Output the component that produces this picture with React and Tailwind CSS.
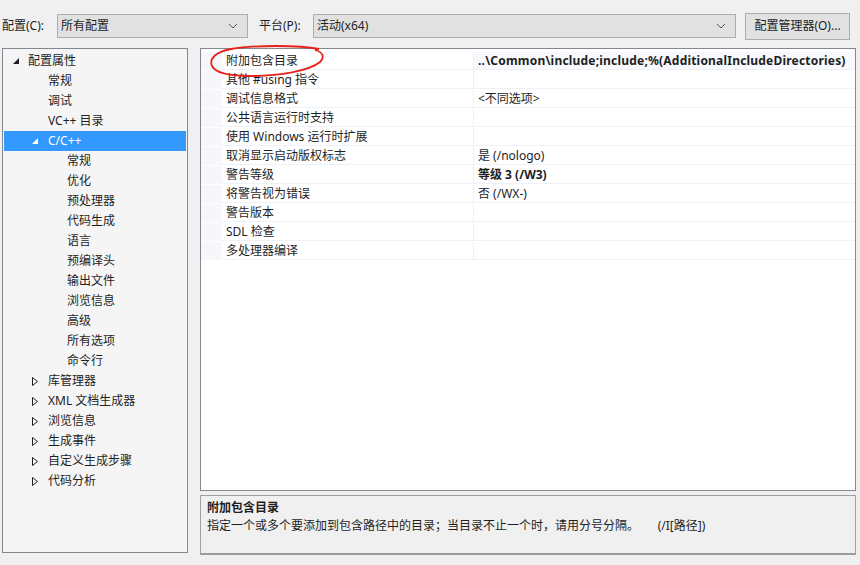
import React from 'react';

// Property page dialog: config bar, tree on the left, property grid + description on the right
const font = { fontFamily: '"Noto Sans", "Noto Sans CJK SC", sans-serif' };

const tree = [
    { label: '配置属性', level: 0, arrow: 'open' },
    { label: '常规', level: 1 },
    { label: '调试', level: 1 },
    { label: 'VC++ 目录', level: 1 },
    { label: 'C/C++', level: 1, arrow: 'open', selected: true },
    { label: '常规', level: 2 },
    { label: '优化', level: 2 },
    { label: '预处理器', level: 2 },
    { label: '代码生成', level: 2 },
    { label: '语言', level: 2 },
    { label: '预编译头', level: 2 },
    { label: '输出文件', level: 2 },
    { label: '浏览信息', level: 2 },
    { label: '高级', level: 2 },
    { label: '所有选项', level: 2 },
    { label: '命令行', level: 2 },
    { label: '库管理器', level: 1, arrow: 'closed' },
    { label: 'XML 文档生成器', level: 1, arrow: 'closed' },
    { label: '浏览信息', level: 1, arrow: 'closed' },
    { label: '生成事件', level: 1, arrow: 'closed' },
    { label: '自定义生成步骤', level: 1, arrow: 'closed' },
    { label: '代码分析', level: 1, arrow: 'closed' },
];

const props = [
    { name: '附加包含目录', value: '..\\Common\\include;include;%(AdditionalIncludeDirectories)', bold: true, wide: true },
    { name: '其他 #using 指令', value: '' },
    { name: '调试信息格式', value: '<不同选项>' },
    { name: '公共语言运行时支持', value: '' },
    { name: '使用 Windows 运行时扩展', value: '' },
    { name: '取消显示启动版权标志', value: '是 (/nologo)' },
    { name: '警告等级', value: '等级 3 (/W3)', bold: true },
    { name: '将警告视为错误', value: '否 (/WX-)' },
    { name: '警告版本', value: '' },
    { name: 'SDL 检查', value: '' },
    { name: '多处理器编译', value: '' },
];

const Chevron = () => (
    <svg width="10" height="6" viewBox="0 0 10 6" className="mr-[9px]">
        <path d="M1 1 L5 5 L9 1" fill="none" stroke="#555" strokeWidth="1" />
    </svg>
);

const Arrow = ({ type, selected }) =>
    type === 'open' ? (
        <svg width="6" height="6" viewBox="0 0 6 6">
            <path d="M6 0 L6 6 L0 6 Z" fill={selected ? '#fff' : '#1e1e1e'} />
        </svg>
    ) : (
        <svg width="6" height="9" viewBox="0 0 6 9">
            <path d="M0.5 0.5 L5.5 4.5 L0.5 8.5 Z" fill="none" stroke="#1e1e1e" strokeWidth="1" />
        </svg>
    );

const indents = ['pl-[24px]', 'pl-[44px]', 'pl-[63px]'];
const arrowPos = ['left-[9px]', 'left-[28px]', 'left-[48px]'];

const App = () => {
    return (
        <div className="w-[860px] h-[565px] bg-[#f0f0f0] text-[12px] text-[#1e1e1e] overflow-hidden" style={font}>
            {/* Config bar */}
            <div className="flex items-center h-[48px] pt-[4px] pl-[2px]">
                <span className="w-[55px]">配置(C):</span>
                <div className="w-[191px] h-[24px] flex items-center justify-between bg-[#e1e1e1] border border-[#adadad] pl-[3px]">
                    <span>所有配置</span>
                    <Chevron />
                </div>
                <span className="ml-[11px] w-[54px]">平台(P):</span>
                <div className="w-[423px] h-[24px] flex items-center justify-between bg-[#e1e1e1] border border-[#adadad] pl-[3px]">
                    <span>活动(x64)</span>
                    <Chevron />
                </div>
                <div className="ml-[9px] w-[105px] h-[27px] flex items-center justify-center bg-[#e1e1e1] border border-[#adadad]">
                    配置管理器(O)...
                </div>
            </div>

            <div className="flex">
                {/* Tree */}
                <div className="ml-[2px] w-[186px] h-[505px] bg-[#f5f5f5] border border-[#828790] pt-[2px] px-[1px]">
                    {tree.map((t, i) => (
                        <div
                            key={i}
                            className={`relative h-[20px] flex items-center ${indents[t.level]} ${t.selected ? 'bg-[#3399ff] text-white' : ''}`}
                        >
                            {t.arrow && (
                                <span className={`absolute ${arrowPos[t.level]} top-0 h-full flex items-center`}>
                                    <Arrow type={t.arrow} selected={t.selected} />
                                </span>
                            )}
                            {t.label}
                        </div>
                    ))}
                </div>

                {/* Right side */}
                <div className="ml-[12px] w-[656px] flex flex-col gap-[4px]">
                    <div className="relative h-[443px] bg-white border border-[#828790] pt-[2px]">
                        {props.map((p, i) => (
                            <div key={i} className="flex h-[19px] pt-[1px]">
                                <div className="w-[21px] bg-[#f5f7fa]" />
                                <div className="w-[252px] pl-[4px] flex items-center border-b border-[#eef1f6] border-r">
                                    {p.name}
                                </div>
                                <div className={`flex-1 pl-[4px] flex items-center border-b border-[#eef1f6] whitespace-nowrap ${i === 0 ? 'bg-[#f7f9fc]' : ''} ${p.bold ? 'font-bold' : ''} ${p.wide ? 'tracking-[0.2px]' : ''}`}>
                                    {p.value}
                                </div>
                            </div>
                        ))}
                        {/* red annotation circle */}
                        <svg className="absolute left-[8px] top-[-4px]" width="120" height="34" viewBox="0 0 120 34">
                            <path
                                d="M110 4 C 90 0, 45 0, 22 4 C 6 7, 0 14, 3 21 C 7 29, 22 31, 42 31 C 70 31, 100 26, 111 17 C 116 12, 114 7, 106 5"
                                fill="none"
                                stroke="#e8201a"
                                strokeWidth="1.8"
                            />
                        </svg>
                    </div>

                    {/* Description */}
                    <div className="h-[60px] bg-[#f0f0f0] border border-[#a0a0a0] border-b-2 border-b-[#9a9a9a] px-[6px] pt-[3px] leading-[18px]">
                        <div className="font-bold">附加包含目录</div>
                        <div className="whitespace-pre">指定一个或多个要添加到包含路径中的目录；当目录不止一个时，请用分号分隔。      (/I[路径])</div>
                    </div>
                </div>
            </div>
        </div>
    );
};

export default App;
